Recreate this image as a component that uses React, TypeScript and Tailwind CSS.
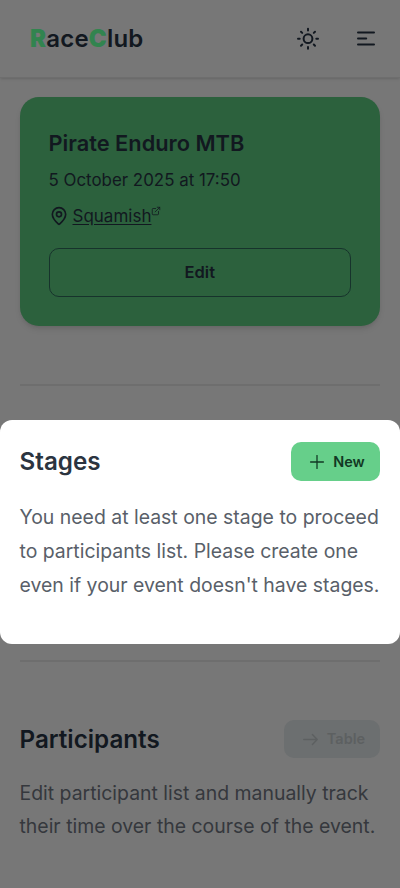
import React from 'react';
import { ExternalLink, MapPin, Plus } from 'lucide-react';

const SunIcon = () => (
  <svg className="h-6 w-6" viewBox="0 0 24 24" fill="none" stroke="currentColor" strokeWidth="2" strokeLinecap="round">
    <circle cx="12" cy="11.7" r="4.4" />
    <path d="M12 1.7v1.7M12 20v1.7M2 11.7h1.7M20.3 11.7h1.7M5 4.7l1.2 1.2M17.8 17.5l1.2 1.2M5 18.7l1.2-1.2M17.8 5.9l1.2-1.2" />
  </svg>
);

const MenuIcon = () => (
  <svg className="h-6 w-6" viewBox="0 0 24 24" fill="none" stroke="currentColor" strokeWidth="2" strokeLinecap="round">
    <path d="M4 5.5h16M4 11.5h8.2M4 17.5h16" />
  </svg>
);

const ArrowIcon = () => (
  <svg className="h-[23px] w-[23px]" viewBox="0 0 24 24" fill="none" stroke="currentColor" strokeWidth="1.5" strokeLinecap="round" strokeLinejoin="round">
    <path d="M5 12h14M14 6.8l5 5.2-5 5.2" />
  </svg>
);

const Header = () => (
  <header className="flex h-[78px] items-center justify-between border-b border-[#6e6e6e] pr-[22px] pl-[30px] shadow-sm">
    <div className="text-[24px] font-semibold tracking-[0.2px]">
      <span className="font-black text-[#32844f]">R</span>ace
      <span className="font-black text-[#32844f]">C</span>lub
    </div>
    <div className="flex items-center gap-[34px]">
      <button aria-label="Theme">
        <SunIcon />
      </button>
      <button aria-label="Menu">
        <MenuIcon />
      </button>
    </div>
  </header>
);

const EventCard = () => (
  <div className="mr-5 ml-[19.5px] mt-[19px] h-[229px] rounded-[19px] bg-[#2c613d] px-[29px] pt-[29px] shadow-md">
    <h2 className="text-[21.8px] leading-[34px] font-semibold">Pirate Enduro MTB</h2>
    <p className="mt-1.5 text-[16.9px] leading-7">5 October 2025 at 17:50</p>
    <div className="mt-2 flex h-7 items-center gap-1">
      <MapPin size={20} strokeWidth={2} />
      <a className="flex text-[17px] leading-7">
        <span className="underline underline-offset-2">Squamish</span>
        <ExternalLink size={10} strokeWidth={1.9} className="mt-1" />
      </a>
    </div>
    <button className="mt-[18px] h-[49px] w-full rounded-[10px] border border-[#17332c] pb-px text-[16.5px] font-semibold">Edit</button>
  </div>
);

const StagesSection = () => (
  <section className="mt-[34px] h-[224px] rounded-xl bg-white pt-[22px] pr-5 pl-[19.5px] text-[#2b3440]">
    <div className="flex items-center justify-between">
      <h2 className="pt-px text-[24.2px] leading-8 font-semibold">Stages</h2>
      <button className="flex h-[39px] w-[89px] items-center justify-center gap-[5px] rounded-[10px] bg-[#66cf8a] text-[14.5px] font-semibold text-[#123824]">
        <Plus size={22} strokeWidth={1.4} />
        New
      </button>
    </div>
    <p className="mt-[18.5px] text-[19.43px] leading-[34px] whitespace-nowrap text-[#595f69]">
      You need at least one stage to proceed
      <br />
      to participants list. Please create one
      <br />
      even if your event doesn't have stages.
    </p>
  </section>
);

const ParticipantsSection = () => (
  <section className="mt-[58px] pr-5 pl-[19.5px]">
    <div className="flex items-center justify-between">
      <h2 className="pt-px text-[24.2px] leading-8 font-semibold">Participants</h2>
      <button disabled className="flex h-[38px] w-24 items-center justify-center gap-[5px] rounded-[10px] bg-[#6c6f70] text-[14.5px] font-semibold text-[#5d6061]">
        <ArrowIcon />
        Table
      </button>
    </div>
    <p className="mt-[18.5px] text-[19.43px] leading-[33.5px] whitespace-nowrap text-[#35383d]">
      Edit participant list and manually track
      <br />
      their time over the course of the event.
    </p>
  </section>
);

const App = () => {
  return (
    <div className="h-[888px] w-[400px] overflow-hidden bg-[#777777] font-['Inter',sans-serif] text-[#121820]">
      <Header />
      <EventCard />
      <div className="mx-5 mt-[58px] h-0.5 bg-[#6e6e6e]" />
      <StagesSection />
      <div className="mx-5 mt-4 h-0.5 bg-[#6e6e6e]" />
      <ParticipantsSection />
    </div>
  );
};

export default App;
